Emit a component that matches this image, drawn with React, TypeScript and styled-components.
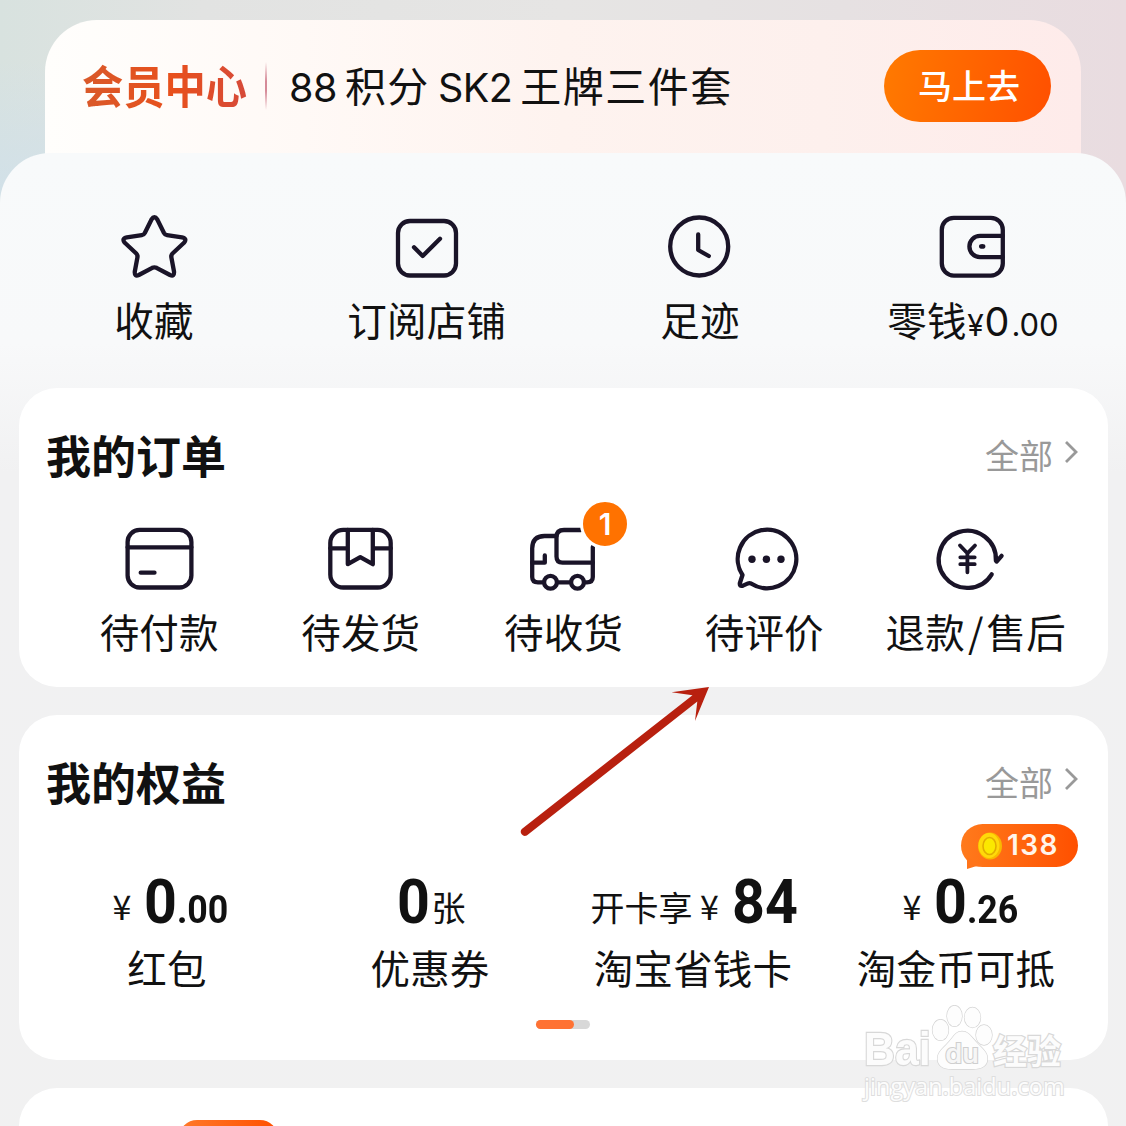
import React from "react";
import styled, { createGlobalStyle } from "styled-components";

const cjk = `"Noto Sans CJK SC", sans-serif`;
const latin = `Inter, "Noto Sans CJK SC", sans-serif`;
const ink = "#1a1428";

const GlobalStyle = createGlobalStyle`
  * { box-sizing: border-box; }
  body { margin: 0; background: #f1f1f1; font-family: ${cjk}; color: #111; }
`;

const Page = styled.div`
  position: relative;
  width: 1126px;
  height: 1126px;
  overflow: hidden;
  display: flex;
  flex-direction: column;
  padding-top: 20px;
  background:
    linear-gradient(180deg, rgba(207, 224, 236, 0) 60px, rgba(207, 224, 236, 0.7) 190px, rgba(207, 224, 236, 0) 210px) 0 0 / 50px 210px no-repeat,
    linear-gradient(90deg, #d8e2df 0%, #e2e3e2 18%, #e6e5e4 50%, #e6e1e2 75%, #e9dce0 100%);
`;

const Banner = styled.header`
  flex: none;
  height: 137px;
  margin: 0 45px;
  padding: 0 30px 5px 38px;
  border-radius: 52px 52px 0 0;
  display: flex;
  align-items: center;
  background: linear-gradient(90deg, #fffefc 0%, #fff9f6 25%, #fef3ef 50%, #fdf0ed 75%, #feebea 100%);
`;

const BrandSlot = styled.div`
  width: 165px;
  height: 52px;
`;

const Brand = styled.span`
  display: block;
  width: max-content;
  font-size: 43px;
  line-height: 48px;
  font-weight: 700;
  transform: scale(0.96, 1.06);
  transform-origin: 0 50%;
  margin-left: -1px;
  background: linear-gradient(90deg, #d9592a 0%, #e8501c 55%, #d64a3a 100%);
  -webkit-background-clip: text;
  background-clip: text;
  color: transparent;
`;

const Divider = styled.i`
  width: 2px;
  height: 48px;
  margin: 0 22px 0 17px;
  background: linear-gradient(180deg, rgba(205, 110, 130, 0), #d58a98 40%, #d58a98 60%, rgba(205, 110, 130, 0));
`;

const Promo = styled.div`
  flex: 1;
  display: flex;
  align-items: baseline;
  gap: 8px;
  font-size: 41px;
  line-height: 48px;
  white-space: nowrap;
  letter-spacing: 1.5px;
`;

const PromoLatin = styled.span`
  font-family: ${latin};
  font-size: 39.5px;
  letter-spacing: -0.5px;
`;

const GoButton = styled.button`
  width: 167px;
  height: 72px;
  border: 0;
  border-radius: 36px;
  padding: 0 0 2px 3px;
  font: 500 34px/40px ${cjk};
  color: #fff;
  background: linear-gradient(100deg, #ff7a00, #ff5000);
`;

const Sheet = styled.main`
  flex: 1;
  margin-top: -4px;
  border-radius: 50px 50px 0 0;
  background: linear-gradient(180deg, #f8fafb 0, #f8f9fa 190px, #f1f1f2 320px, #f1f1f1 100%);
`;

const QuickRow = styled.nav`
  height: 235px;
  padding: 58px 17.5px 0;
  display: grid;
  grid-template-columns: repeat(4, 272.8px);
`;

const Item = styled.div<{ $gap: number }>`
  display: flex;
  flex-direction: column;
  align-items: center;
  gap: ${(p) => p.$gap}px;
`;

const Label = styled.div<{ $shift?: number }>`
  font-size: 39.5px;
  line-height: 40px;
  letter-spacing: 0.2px;
  white-space: nowrap;
  margin-left: ${(p) => (p.$shift || 0) * 2}px;
`;

const Slash = styled.span`
  margin: 0 3px;
`;

const Num = styled.span<{ $size: number; $pad?: number }>`
  font-family: ${latin};
  font-size: ${(p) => p.$size}px;
  line-height: 1px;
  margin-left: ${(p) => p.$pad || 0}px;
  letter-spacing: -0.1px;
`;

const Card = styled.section<{ $height: number }>`
  height: ${(p) => p.$height}px;
  margin: 0 18px 28px 19px;
  border-radius: 38px;
  background: #fff;
`;

const CardHead = styled.div`
  display: flex;
  justify-content: space-between;
  align-items: center;
  height: 135px;
  padding: 0 29px 2px 27px;
`;

const Title = styled.h2`
  margin: 0;
  font-size: 45px;
  line-height: 48px;
  font-weight: 700;
`;

const More = styled.a`
  display: flex;
  align-items: center;
  gap: 10px;
  font-size: 34px;
  line-height: 40px;
  color: #999;
`;

const Orders = styled.div`
  display: grid;
  grid-template-columns: 201.6px 201.6px 202.4px 203px 204px;
  padding-left: 39.7px;
`;

const IconBox = styled.div`
  position: relative;
  width: 72px;
  height: 72px;
`;

const Badge = styled.b`
  position: absolute;
  left: 53px;
  top: -24px;
  width: 50px;
  height: 50px;
  border: 3px solid #fff;
  border-radius: 50%;
  background: #ff7200;
  color: #fff;
  font: 600 30px/44px Inter, sans-serif;
  text-align: center;
`;

const Benefits = styled.div`
  display: grid;
  grid-template-columns: repeat(4, 263px);
  padding-left: 16.5px;
  margin-top: 23px;
`;

const Amount = styled.div<{ $shift?: number }>`
  position: relative;
  height: 56px;
  display: flex;
  align-items: baseline;
  white-space: nowrap;
  margin-left: ${(p) => (p.$shift || 0) * 2}px;
`;

const Unit = styled.span`
  font-size: 34px;
  line-height: 56px;
  padding-bottom: 3px;
  transform: translateY(-2.5px);
`;

const Yen = styled.span<{ $before?: number }>`
  font-size: 34px;
  line-height: 56px;
  width: 20px;
  margin: 0 12px 0 ${(p) => p.$before || 0}px;
  display: flex;
  justify-content: center;
  transform: translateY(-3px);
`;

const Digits = styled.b<{ $size: number; $width: number }>`
  width: ${(p) => p.$width}px;
  font: 700 ${(p) => p.$size}px/58px Roboto, sans-serif;

  span {
    display: inline-block;
    transform: scaleX(0.94);
    transform-origin: 0 50%;
  }
`;

const CoinTag = styled.div`
  position: absolute;
  left: 59px;
  top: -49px;
  width: 117px;
  height: 43px;
  padding-left: 17px;
  display: flex;
  align-items: center;
  gap: 5px;
  border-radius: 22px;
  background: linear-gradient(90deg, #ff7a1c, #ff5000);
  color: #fff5ea;
  font: 600 28px/43px Inter, sans-serif;
  letter-spacing: 1.4px;

  &::before {
    content: "";
    position: absolute;
    left: 6px;
    bottom: -2px;
    width: 18px;
    height: 14px;
    background: #ff741a;
    clip-path: polygon(0 20%, 100% 80%, 45% 82%, 0 100%);
  }
`;

const Pager = styled.div`
  width: 54px;
  height: 9px;
  margin: 33px 0 0 517px;
  border-radius: 5px;
  background: #d8d8d8;

  i {
    display: block;
    width: 38px;
    height: 9px;
    border-radius: 5px;
    background: #ff7233;
  }
`;

const NextCard = styled(Card)`
  padding-top: 32px;
`;

const NextChip = styled.div`
  width: 99px;
  height: 40px;
  margin-left: 160px;
  border-radius: 18px 18px 0 0;
  background: linear-gradient(90deg, #ff7a2a, #ff5000);
`;

const Arrow = styled.svg`
  position: absolute;
  left: 515px;
  top: 680px;
`;

const Watermark = styled.div`
  position: absolute;
  left: 864px;
  top: 1003px;
  width: 210px;
  color: #fcfcfc;
  -webkit-text-stroke: 2.4px #d8d8d8;
  paint-order: stroke fill;
`;

const MarkRow = styled.div`
  display: flex;
  align-items: flex-end;
  height: 68px;
  font: 700 46px/44px "Liberation Sans", sans-serif;

  svg { margin: 0 0 0 -3px; overflow: visible; }
`;

const MarkWord = styled.span<{ $width: number; $scale: number }>`
  width: ${(p) => p.$width}px;
  white-space: nowrap;
  transform: scaleX(${(p) => p.$scale});
  transform-origin: 0 50%;
`;

const MarkCjk = styled.span`
  font: 700 34px/43px ${cjk};
`;

const MarkUrl = styled.div`
  font: 400 23.4px/30px "Open Sans", sans-serif;
  letter-spacing: 0.1px;
  -webkit-text-stroke: 2px #dedede;
`;

const IconSvg = styled.svg`
  display: block;
`;

const ChevronSvg = styled.svg`
  margin-top: -6px;
`;

const Glyph = ({ children }: { children: React.ReactNode }) => (
  <IconSvg width="72" height="72" viewBox="0 0 72 72" fill="none" stroke={ink} strokeWidth="4.3" strokeLinecap="round" strokeLinejoin="round">
    {children}
  </IconSvg>
);

const Star = () => (
  <Glyph>
    <path d="M33.5 8.5Q36.4 4 39.3 8.5L46 22Q47 23.9 49 24.2L64 26.4Q69.5 27.5 66 31.8L54.5 42.5Q53 44 53.3 46L56 60.5Q56.5 66 52 64L38.5 56.8Q36.4 55.8 34.3 56.8L20.8 64Q16.3 66 16.8 60.5L19.5 46Q19.8 44 18.3 42.5L6.8 31.8Q3.3 27.5 8.8 26.4L23.8 24.2Q25.8 23.9 26.8 22Z" />
  </Glyph>
);
const Check = () => (
  <Glyph>
    <rect x="7" y="10" width="58" height="54.5" rx="12" />
    <path d="M23 36.2L31.7 45L49 27.7" />
  </Glyph>
);
const Clock = () => (
  <Glyph>
    <circle cx="36.2" cy="35.5" r="29" />
    <path d="M35.2 23.5V39L45.8 45" />
  </Glyph>
);
const Wallet = () => (
  <Glyph>
    <rect x="5.8" y="6.8" width="61" height="57.8" rx="12" />
    <path d="M66.6 24.9H44A10.6 10.6 0 0 0 44 46.1H66.6" />
    <ellipse cx="46.2" cy="35.4" rx="3.2" ry="2.4" fill={ink} stroke="none" />
  </Glyph>
);
const PayCard = () => (
  <Glyph>
    <rect x="4.6" y="6.9" width="63.8" height="57.6" rx="12" />
    <path d="M4.6 24.3H68.4M17.7 49.7H31.5" />
  </Glyph>
);
const Parcel = () => (
  <Glyph>
    <rect x="5.3" y="6.9" width="60.4" height="57.6" rx="13" />
    <path d="M5.3 25.3H22.8M47.8 25.3H65.7M22.8 7V41.2L35.3 34.2L47.8 41.2V7" />
  </Glyph>
);
const Truck = () => (
  <Glyph>
    <path d="M29.5 13H17.5Q5.2 13 5.2 25.5V54Q5.2 59.3 11 59.3H16.5M30.5 59.3H43.5M57.5 59.3H60Q65.8 59.3 65.8 54V24" />
    <path d="M54 7H37Q29.5 7 29.5 14V33.5Q29.5 39.7 35.5 39.7H65.8M5.2 39.7H17.8V32.5" />
    <circle cx="23.5" cy="59.3" r="6.4" />
    <circle cx="50.5" cy="59.3" r="6.4" />
  </Glyph>
);
const Bubble = () => (
  <Glyph>
    <path d="M21 60.5A29.3 29.3 0 1 0 12.5 52L9.9 60Q9.2 63.9 13 62.6L18 60.4Q19.5 59.8 21 60.5Z" />
    <g fill={ink} stroke="none">
      <circle cx="22" cy="36.3" r="3.7" />
      <circle cx="36.4" cy="36.3" r="3.7" />
      <circle cx="51" cy="36.3" r="3.7" />
    </g>
  </Glyph>
);
const Refund = () => (
  <Glyph>
    <path d="M58.7 51.3A28.6 28.6 0 1 1 62.9 37.5L63.6 38.6L68.6 32.8" />
    <path d="M27 22.5L34.4 30.3L42 22.5M34.4 30.3V49.3M27.3 34.3H41.7M27.3 41.2H41.7" strokeWidth="3.8" />
  </Glyph>
);

const Chevron = () => (
  <ChevronSvg width="16" height="26" viewBox="0 0 16 26" fill="none" stroke="#999" strokeWidth="2.8">
    <path d="M3 3L13 13L3 23" />
  </ChevronSvg>
);

const Coin = () => (
  <svg width="24" height="28" viewBox="0 0 24 28">
    <ellipse cx="12" cy="14" rx="12" ry="13.5" fill="#f9b800" />
    <ellipse cx="11" cy="13.5" rx="10.5" ry="12.5" fill="#ffd90a" />
    <ellipse cx="11.5" cy="14" rx="6.5" ry="8.5" fill="#fbe800" stroke="#e2ad00" strokeWidth="1.6" />
  </svg>
);

const Paw = () => (
  <svg width="62" height="66" viewBox="0 0 62 66" fill="#fdfdfd" stroke="#d4d4d4" strokeWidth="1.3">
    <ellipse cx="9.5" cy="25" rx="8" ry="10.3" />
    <ellipse cx="23.5" cy="11" rx="7.5" ry="10.3" />
    <ellipse cx="41.5" cy="12.5" rx="8" ry="10" />
    <ellipse cx="53" cy="30" rx="8" ry="10" />
    <path d="M31 26.5C38 26.5 41 33 47 39C53 45 58 49 56 57C53 65.5 42 64 31 64C20 64 10 65.5 7 57C5 49 10 45 16 39C22 33 24 26.5 31 26.5Z" />
    <text x="31" y="58" textAnchor="middle" fontFamily="Inter, sans-serif" fontSize="27" fontWeight="600" fill="#f6f6f6" stroke="#cfcfcf" strokeWidth="2.2">du</text>
  </svg>
);

const orders = [
  { icon: <PayCard />, text: "待付款", shift: -0.3 },
  { icon: <Parcel />, text: "待发货", shift: -0.3 },
  { icon: <Truck />, text: "待收货", shift: 0.5, badge: "1" },
  { icon: <Bubble />, text: "待评价", shift: -1.5 },
  { icon: <Refund />, text: <>退款<Slash>/</Slash>售后</>, shift: 6.5 },
];

const SectionHead = ({ title }: { title: string }) => (
  <CardHead>
    <Title>{title}</Title>
    <More>全部<Chevron /></More>
  </CardHead>
);

export default function App() {
  return (
    <Page>
      <GlobalStyle />
      <Banner>
        <BrandSlot><Brand>会员中心</Brand></BrandSlot>
        <Divider />
        <Promo>
          <PromoLatin>88</PromoLatin>
          <span>积分</span>
          <PromoLatin>SK2</PromoLatin>
          <span>王牌三件套</span>
        </Promo>
        <GoButton>马上去</GoButton>
      </Banner>
      <Sheet>
        <QuickRow>
          <Item $gap={16}><Star /><Label>收藏</Label></Item>
          <Item $gap={16}><Check /><Label>订阅店铺</Label></Item>
          <Item $gap={16}><Clock /><Label $shift={0.5}>足迹</Label></Item>
          <Item $gap={16}>
            <Wallet />
            <Label $shift={0.5}>零钱<Num $size={30} $pad={0.5}>¥</Num><Num $size={39.5} $pad={1}>0</Num><Num $size={31} $pad={2}>.00</Num></Label>
          </Item>
        </QuickRow>
        <Card $height={299}>
          <SectionHead title="我的订单" />
          <Orders>
            {orders.map((o, i) => (
              <Item key={i} $gap={16}>
                <IconBox>{o.icon}{o.badge && <Badge>{o.badge}</Badge>}</IconBox>
                <Label $shift={o.shift}>{o.text}</Label>
              </Item>
            ))}
          </Orders>
        </Card>
        <Card $height={345}>
          <SectionHead title="我的权益" />
          <Benefits>
            <Item $gap={18}>
              <Amount $shift={3.5}>
                <Yen>¥</Yen>
                <Digits $size={61} $width={33}><span>0</span></Digits>
                <Digits $size={38} $width={52}><span>.00</span></Digits>
              </Amount>
              <Label>红包</Label>
            </Item>
            <Item $gap={18}>
              <Amount $shift={1}>
                <Digits $size={61} $width={35}><span>0</span></Digits>
                <Unit>张</Unit>
              </Amount>
              <Label>优惠券</Label>
            </Item>
            <Item $gap={18}>
              <Amount $shift={1}>
                <Unit>开卡享</Unit>
                <Yen $before={7}>¥</Yen>
                <Digits $size={61} $width={66}><span>84</span></Digits>
              </Amount>
              <Label>淘宝省钱卡</Label>
            </Item>
            <Item $gap={18}>
              <Amount $shift={4.5}>
                <Yen>¥</Yen>
                <Digits $size={61} $width={33}><span>0</span></Digits>
                <Digits $size={38} $width={52}><span>.26</span></Digits>
                <CoinTag><Coin />138</CoinTag>
              </Amount>
              <Label>淘金币可抵</Label>
            </Item>
          </Benefits>
          <Pager><i /></Pager>
        </Card>
        <NextCard $height={345}>
          <NextChip />
        </NextCard>
      </Sheet>
      <Arrow width="200" height="160" viewBox="515 680 200 160" fill="#b8200f">
        <path d="M709 687L671.5 692.3L692.5 695.2L521.8 829A4.2 4.2 0 0 0 526.8 835.5L697.3 701.6L695 721Z" />
      </Arrow>
      <Watermark>
        <MarkRow>
          <MarkWord $width={70} $scale={0.93}>Bai</MarkWord>
          <Paw />
          <MarkCjk>经验</MarkCjk>
        </MarkRow>
        <MarkUrl>jingyan.baidu.com</MarkUrl>
      </Watermark>
    </Page>
  );
}
